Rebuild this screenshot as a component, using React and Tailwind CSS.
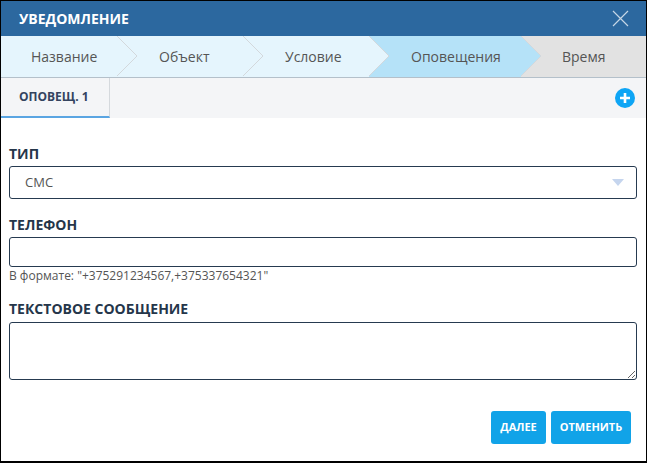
const steps = [
  { name: "Название", width: "w-[116px]", bg: "bg-[#e5f5fd]", text: "pl-[30px]", z: "z-40" },
  { name: "Объект", width: "w-[126px]", bg: "bg-[#e5f5fd]", text: "pl-[42px]", z: "z-30" },
  { name: "Условие", width: "w-[126px]", bg: "bg-[#e5f5fd]", text: "pl-[42px]", z: "z-20" },
  { name: "Оповещения", width: "w-[152px]", bg: "bg-[#b5e2f8]", text: "pl-[42px]", z: "z-10" },
  { name: "Время", width: "flex-1", bg: "bg-[#e2e2e2]", text: "pl-[41px]", z: "z-0" },
];

function Arrow({ fill }) {
  return (
    <svg className="absolute top-0 left-full" width="20" height="40" viewBox="0 0 20 40">
      <path d="M0 0 L20 20 L0 40 Z" fill={fill} />
      <path d="M0 0 L20 20 L0 40" fill="none" stroke="#d3d8dc" strokeWidth="1" />
    </svg>
  );
}

const arrowFill = { "Оповещения": "#b5e2f8" };

export default function App() {
  return (
    <div className="w-[647px] h-[463px] bg-white border border-black border-b-2 flex flex-col text-[#333] overflow-hidden" style={{ fontFamily: '"Open Sans", sans-serif' }}>
      <div className="h-[35px] bg-[#2c689f] flex items-center justify-between pl-[18px] pr-[16px]">
        <span className="text-[14px] font-bold text-white">УВЕДОМЛЕНИЕ</span>
        <svg width="17" height="17" viewBox="0 0 17 17" className="mr-[1px]">
          <path d="M1 1 L16 16 M16 1 L1 16" stroke="#c6d6e5" strokeWidth="1.2" fill="none" />
        </svg>
      </div>

      <div className="flex h-[42px] border-b border-[#b4c0ca]">
        {steps.map((step, i) => (
          <div key={step.name} className={`relative flex items-center text-[14px] text-[#555] ${step.width} ${step.bg} ${step.text} ${step.z}`}>
            {step.name}
            {i < steps.length - 1 && <Arrow fill={arrowFill[step.name] || "#e5f5fd"} />}
          </div>
        ))}
      </div>

      <div className="h-[40px] bg-[#f4f5f7] flex items-stretch justify-between pr-[11px]">
        <div className="w-[109px] border-r border-[#d5d9dd] border-b-2 border-b-[#5aa5e2] flex items-center pl-[18px] text-[12px] font-bold text-[#33435f]">
          ОПОВЕЩ. 1
        </div>
        <div className="flex items-center">
          <svg width="20" height="20" viewBox="0 0 20 20">
            <circle cx="10" cy="10" r="10" fill="#0ea5f5" />
            <path d="M10 5 V15 M5 10 H15" stroke="#fff" strokeWidth="2.6" />
          </svg>
        </div>
      </div>

      <div className="flex-1 flex flex-col pl-[8px] pr-[9px]">
        <label className="mt-[26px] text-[14px] leading-[19px] font-bold text-[#25364a]">ТИП</label>
        <div className="mt-[3px] h-[33px] border border-[#263a50] rounded-[3px] flex items-center justify-between pl-[15px] pr-[12px] text-[13px] text-[#555]">
          <span>СМС</span>
          <svg width="12" height="7" viewBox="0 0 12 7">
            <path d="M0 0 H12 L6 7 Z" fill="#c5d5ee" />
          </svg>
        </div>

        <label className="mt-[16px] text-[14px] leading-[19px] font-bold text-[#25364a]">ТЕЛЕФОН</label>
        <input className="mt-[3px] h-[30px] border border-[#263a50] rounded-[3px] outline-none" />
        <p className="mt-[1px] text-[12px] leading-[16px] text-[#555]">В формате: "+375291234567,+375337654321"</p>

        <label className="mt-[15px] text-[14px] leading-[19px] font-bold text-[#25364a]">ТЕКСТОВОЕ СООБЩЕНИЕ</label>
        <textarea className="mt-[4px] h-[58px] border border-[#263a50] rounded-[3px] outline-none" />

        <div className="mt-[31px] flex justify-end gap-[5px] pr-[6px]">
          <button className="w-[55px] h-[33px] rounded-[3px] bg-[#11a3e8] text-white text-[11px] font-bold">ДАЛЕЕ</button>
          <button className="w-[80px] h-[33px] rounded-[3px] bg-[#11a3e8] text-white text-[11px] font-bold">ОТМЕНИТЬ</button>
        </div>
      </div>
    </div>
  );
}
